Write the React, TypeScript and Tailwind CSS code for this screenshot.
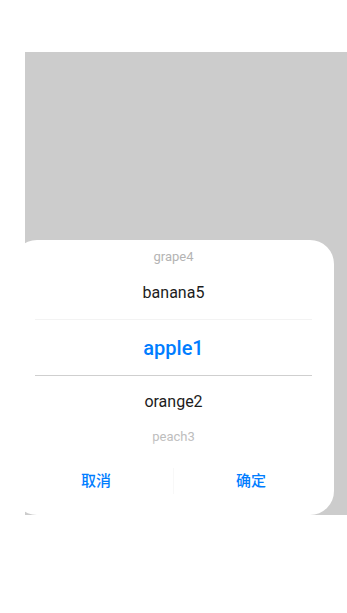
const font = {
  fontFamily: '"Roboto", "Noto Sans CJK SC", sans-serif',
};

function PickerRow({
  label,
  className,
}: {
  label: string;
  className: string;
}) {
  return (
    <div className={`flex items-center justify-center ${className}`}>
      {label}
    </div>
  );
}

export default function App() {
  return (
    <div className="h-[613px] w-full bg-white pt-[52px] pl-[25px]" style={font}>
      {/* gray page behind the sheet */}
      <div className="flex h-[463px] w-full flex-col justify-end bg-[#cccccc]">
        {/* sheet */}
        <div className="-ml-[12px] flex h-[275px] w-[321px] flex-col rounded-[24px] bg-white">
          <div className="relative flex flex-col">
            <PickerRow label="grape4" className="h-[34px] text-[13px] text-[#b4b4b4]" />
            <PickerRow label="banana5" className="h-[38px] text-[16px] text-[#1c1c1c]" />
            <div className="mx-[22px] mt-[7px] h-px bg-[#f3f3f3]" />
            <PickerRow label="apple1" className="h-[55px] text-[20px] font-medium text-[#007dff]" />
            <div className="mx-[22px] h-px bg-[#cfcfcf]" />
            <PickerRow label="orange2" className="mt-[7px] h-[38px] text-[16px] text-[#1c1c1c]" />
            <PickerRow label="peach3" className="h-[32px] text-[13px] text-[#bdbdbd]" />
            <div className="pointer-events-none absolute bottom-0 left-0 right-0 h-[14px] bg-gradient-to-b from-white/0 to-white/80" />
          </div>
          <div className="flex h-[56px] items-center px-[6px]">
            <button className="flex-1 text-[15px] font-medium text-[#007dff]">取消</button>
            <div className="h-[26px] w-px bg-[#f8f8f8]" />
            <button className="flex-1 text-[15px] font-medium text-[#007dff]">确定</button>
          </div>
        </div>
      </div>
    </div>
  );
}
